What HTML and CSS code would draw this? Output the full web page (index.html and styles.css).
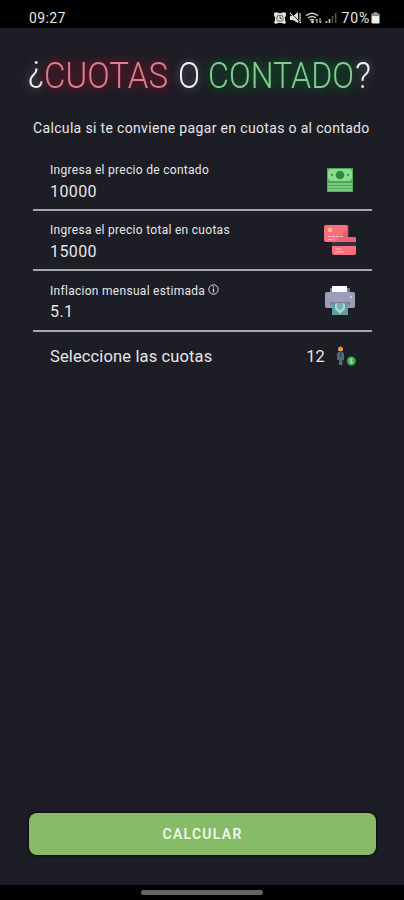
FILE: index.html
```
<!DOCTYPE html>
<html lang="es">
<head>
    <meta charset="UTF-8">
    <meta name="viewport" content="width=device-width, initial-scale=1.0">
    <title>¿Cuotas o contado?</title>
    <link rel="stylesheet" href="styles.css">
</head>
<body>

    <div class="status-bar">
        <span class="clock">09:27</span>
        <div class="status-icons">
            <svg width="12" height="12" viewBox="0 0 12 12">
                <path d="M0 1l3-1 1 1h4l1-1 3 1v3l-1 1v3l1 3-2 1-2-1H4l-2 1-2-1 1-3V5L0 4z" fill="#ddd"/>
                <circle cx="6" cy="6.2" r="3.2" fill="none" stroke="#444" stroke-width=".8"/>
                <path d="M6 4.4v2h1.6" fill="none" stroke="#222" stroke-width=".9"/>
            </svg>
            <svg width="13" height="12" viewBox="0 0 13 12">
                <path d="M1 4h3l5-4v11L4 8H1z" fill="#ddd"/>
                <path d="M1 1l11 10M11 1v10" fill="none" stroke="#ddd" stroke-width="1.2"/>
                <path d="M2 1l9 9" stroke="#000" stroke-width=".8"/>
            </svg>
            <svg width="17" height="12" viewBox="0 0 17 12">
                <path d="M1 3.6Q7 -1.2 13 3.6M3 6Q7 2.8 11 6M5 8.2Q7 6.6 9 8.2" fill="none" stroke="#ccc" stroke-width="1.5"/>
                <circle cx="7.5" cy="9.8" r="1.4" fill="#ddd"/>
                <path d="M12 11V7l-1.400 1.600M15 6v5l1.400-1.600" fill="none" stroke="#ddd" stroke-width="1"/>
            </svg>
            <svg width="12" height="12" viewBox="0 0 12 12">
                <path d="M1.5 9v2M4.500 7v4" stroke="#ccc" stroke-width="1.6"/>
                <path d="M7.500 4v7M10.700 1v10" stroke="#555" stroke-width="1.4"/>
            </svg>
            <span class="battery-level">70%</span>
            <svg width="9" height="12" viewBox="0 0 9 12">
                <path d="M3 0h3v2H3z" fill="#777"/>
                <rect x=".5" y="1.5" width="8" height="10" rx="1.2" fill="#eee"/>
                <path d="M1 2h7v2H1z" fill="#888"/>
            </svg>
        </div>
    </div>

    <main class="container">
        <h1 class="neon">
            <svg width="404" height="72" viewBox="0 0 404 72">
                <text class="white" x="28" y="53" textLength="16" lengthAdjust="spacingAndGlyphs">¿</text>
                <text class="red" x="44" y="60" textLength="124" lengthAdjust="spacingAndGlyphs">CUOTAS</text>
                <text class="white" x="178" y="60" textLength="22" lengthAdjust="spacingAndGlyphs">O</text>
                <text class="green" x="208" y="60" textLength="146" lengthAdjust="spacingAndGlyphs">CONTADO</text>
                <text class="white" x="355" y="60" textLength="16" lengthAdjust="spacingAndGlyphs">?</text>
            </svg>
        </h1>
        <p class="subtitle">Calcula si te conviene pagar en cuotas o al contado</p>

        <form class="form">
            <div class="field">
                <div class="field-text">
                    <label>Ingresa el precio de contado</label>
                    <span class="value">10000</span>
                </div>
                <svg class="icon" width="32" height="32" viewBox="0 0 32 32">
                    <path d="M3 4h26v24H3z" fill="#49a853"/>
                    <path d="M4 7l2-2h20l2 2v8l-2 2H6l-2-2z" fill="#8bdb91"/>
                    <circle cx="16" cy="11" r="4.3" fill="#2e8a42"/>
                    <circle cx="8" cy="11" r="1" fill="#2e8a42"/>
                    <circle cx="24" cy="11" r="1" fill="#2e8a42"/>
                    <path d="M4 20h24M4 23.200h24M4 26.200h24" stroke="#78ca7e" stroke-width="2.200"/>
                </svg>
            </div>
            <div class="field">
                <div class="field-text">
                    <label>Ingresa el precio total en cuotas</label>
                    <span class="value">15000</span>
                </div>
                <svg class="icon" width="32" height="32" viewBox="0 0 32 32">
                    <path d="M2 1h20q2 0 2 2v10h6q2 0 2 2v3H2q-2 0-2-2V3q0-2 2-2z" fill="#f96f80"/>
                    <path d="M12 18L24 4v9h6q2 0 2 2v3z" fill="#ea6175"/>
                    <path d="M24 1v11h-7q-2 0-3 2" fill="none" stroke="#c94c60" stroke-width=".6"/>
                    <rect x="4" y="4" width="4" height="4" rx="1" fill="#ffc06c"/>
                    <path d="M4 12.500h16M4 15.500h5" stroke="#ffc0c5" stroke-width="1" stroke-dasharray="3 1"/>
                    <path d="M8 18h24v4H8z" fill="#34323c"/>
                    <path d="M8 22h24v7q0 2-2 2H10q-2 0-2-2z" fill="#f96f80"/>
                    <path d="M11 25h6M11 28h9" stroke="#ffc0c5" stroke-width="1"/>
                </svg>
            </div>
            <div class="field field-last">
                <div class="field-text">
                    <label>Inflacion mensual estimada
                        <svg class="info" width="11" height="11" viewBox="0 0 11 11">
                            <circle cx="5.500" cy="5.500" r="4.700" fill="none" stroke="#ddd" stroke-width="1"/>
                            <path d="M5.500 2.200v1.300M5.500 4.500v4" stroke="#ddd" stroke-width="1.200"/>
                        </svg>
                    </label>
                    <span class="value">5.1</span>
                </div>
                <svg class="icon" width="32" height="32" viewBox="0 0 32 32">
                    <path d="M6 8V4q0-1 1-1h18q1 0 1 1v4z" fill="#76798d"/>
                    <path d="M8 1h15v7H8z" fill="#fafaff"/>
                    <path d="M3 7h26q2 0 2 2v12q0 2-2 2H4q-3 0-3-2V9q0-2 2-2z" fill="#9c9db8"/>
                    <circle cx="27" cy="12" r="1" fill="#e1e1ec"/>
                    <path d="M6 17h20v3H6z" fill="#7a7f98"/>
                    <path d="M8 18h16v12H8z" fill="#5f9fa0"/>
                    <path d="M11 19l2-1v4l3 3 3-3v-4l2 1v5l-5 5-5-5z" fill="#a8d6d6"/>
                    <path d="M13 18h6v4l-3 3-3-3z" fill="#74b0b1"/>
                </svg>
            </div>
            <div class="quotas">
                <span>Seleccione las cuotas</span>
                <span class="quota-count">12</span>
                <svg class="person" width="20" height="20" viewBox="0 0 20 20">
                    <path d="M2 6h5l1 2v6H6.500v5H3v-5H1V8z" fill="#526b78"/>
                    <path d="M3.900 6h1.400v5H3.900z" fill="#37454f"/>
                    <circle cx="4.500" cy="3" r="2.500" fill="#e5a14f"/>
                    <path d="M2.500 1.600Q4.500-.5 6.500 1.600z" fill="#9a6638"/>
                    <circle cx="15.300" cy="15" r="4.500" fill="#3ea650"/>
                    <path d="M16.800 13.300q-3-1-3 .6c0 1.600 3 .8 3 2.400 0 1.500-3 .8-3.200.2M15.300 12v6" fill="none" stroke="#a6ed9d" stroke-width="1"/>
                </svg>
            </div>
        </form>

        <button type="button" class="submit-button">CALCULAR</button>
    </main>

    <div class="nav-bar"><span class="nav-handle"></span></div>

</body>
</html>
```
FILE: styles.css
```
* { box-sizing: border-box; }
body {
    font-family: Roboto, sans-serif;
    background-color: #1d1d25;
    color: #e6e6e8;
    margin: 0;
    height: 100vh;
    overflow: hidden;
    display: flex;
    flex-direction: column;
}
.status-bar {
    background-color: #000;
    height: 28px;
    padding: 7px 24px 0 29px;
    display: flex;
    justify-content: space-between;
    align-items: center;
}
.clock {
    font-size: 14px;
    letter-spacing: 0.4px;
}
.status-icons {
    display: flex;
    align-items: center;
    gap: 3px;
}
.battery-level {
    font-size: 14px;
    letter-spacing: 0.8px;
    margin: 0 -2px 0 2px;
}
.container {
    flex: 1;
    display: flex;
    flex-direction: column;
}
.neon {
    margin: 0;
    height: 72px;
}
.neon svg { display: block; }
.neon text {
    font-size: 36px;
    line-height: 1;
    font-weight: 300;
}
.neon .white {
    fill: #f0f0f4;
    filter: drop-shadow(0 0 5px #777783);
}
.neon .red {
    fill: #d9808f;
    filter: drop-shadow(0 0 4px #7d142c) drop-shadow(0 0 6px #5c1025);
}
.neon .green {
    fill: #88c992;
    filter: drop-shadow(0 0 4px #08602a) drop-shadow(0 0 6px #0a4522);
}
.subtitle {
    margin: 19px 0 0 33px;
    font-size: 14px;
    line-height: 18px;
    letter-spacing: 0.34px;
    white-space: nowrap;
}
.form {
    margin: 14px 32px 0 33px;
}
.field {
    height: 60px;
    border-bottom: 2px solid #a7a7aa;
    padding: 0 16px 0 17px;
    display: flex;
    justify-content: space-between;
    align-items: center;
}
.field-last { height: 61px; }
.field-text {
    display: flex;
    flex-direction: column;
    padding-top: 4px;
}
.field label {
    font-size: 12px;
    line-height: 18px;
    letter-spacing: 0.29px;
}
.field-last label { margin-bottom: -1px; }
.value {
    font-size: 16px;
    line-height: 25px;
    letter-spacing: 0.4px;
}
.quotas {
    height: 50px;
    padding: 0 16px 2px 17px;
    display: flex;
    align-items: center;
    font-size: 16.5px;
    letter-spacing: 0.13px;
}
.quota-count { margin-left: auto; }
.person { margin-left: 11px; }
.submit-button {
    margin: auto 28px 30px 29px;
    height: 42px;
    border: none;
    border-radius: 8px;
    background-color: #86bb68;
    box-shadow: 0 0 2px 1px #0b0b12;
    color: #f5fbf2;
    font-family: inherit;
    font-size: 14px;
    font-weight: 500;
    letter-spacing: 1.3px;
}
.nav-bar {
    background-color: #000;
    height: 15px;
    display: flex;
    justify-content: center;
    align-items: center;
}
.nav-handle {
    width: 122px;
    height: 5px;
    border-radius: 3px;
    background-color: #666;
}
```
